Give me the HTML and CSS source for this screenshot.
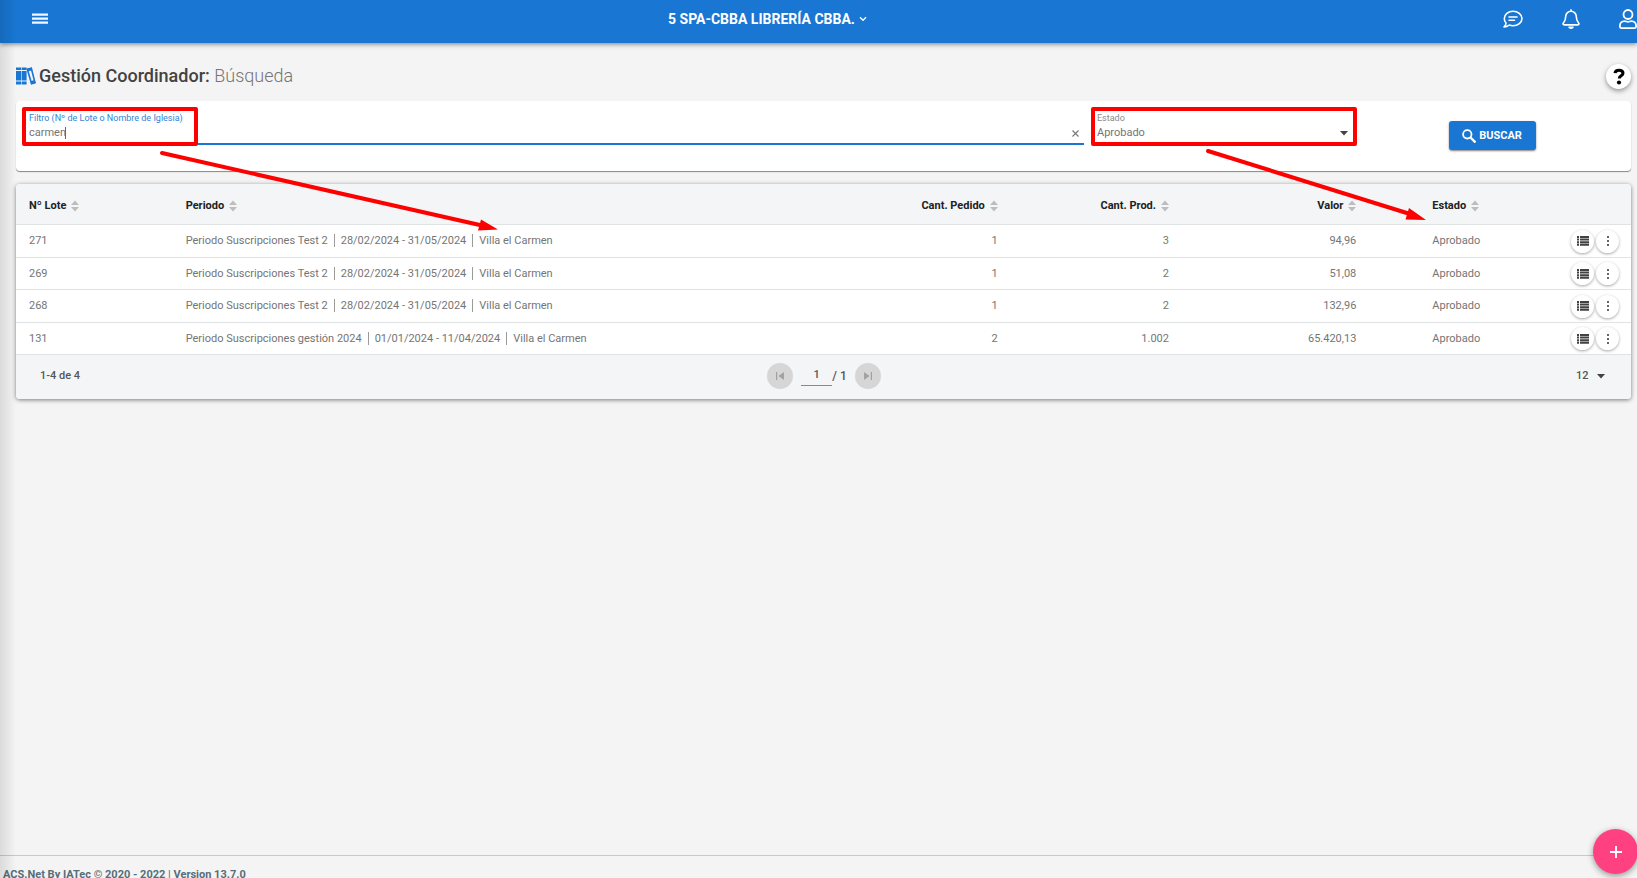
FILE: index.html
```html
<!DOCTYPE html>
<html lang="es">
<head>
<meta charset="utf-8">
<title>Gestión Coordinador</title>
<link rel="stylesheet" href="styles.css">
</head>
<body>
<svg class="sprite" aria-hidden="true">
  <symbol id="sort" viewBox="0 0 8 12"><path d="M4 .5l4 4.500H0zM4 11.500l4-4.500H0z"/></symbol>
  <symbol id="list" viewBox="0 0 12 10"><path d="M0 0h2v2H0zM3 0h9v2H3zM0 2.600h2v2H0zM3 2.600h9v2H3zM0 5.200h2v2H0zM3 5.200h9v2H3zM0 7.800h2v2H0zM3 7.800h9v2H3z"/></symbol>
  <symbol id="dots" viewBox="0 0 4 12"><circle cx="2" cy="2" r="1.100"/><circle cx="2" cy="6" r="1.100"/><circle cx="2" cy="10" r="1.100"/></symbol>
</svg>

<header class="topbar">
  <button class="icon-btn" aria-label="Menú"><svg width="16" height="12" viewBox="0 0 16 12"><path d="M0 .5h16v2.200H0zM0 4.500h16v2.200H0zM0 8.500h16v2.200H0z" fill="#f2f8ff"/></svg></button>
  <button class="org">5 SPA-CBBA LIBRERÍA CBBA.<svg width="8" height="6" viewBox="0 0 8 6"><path d="M1 1.200l3 3 3-3" fill="none" stroke="#fff" stroke-width="1.400"/></svg></button>
  <nav class="actions">
    <button class="icon-btn" aria-label="Mensajes"><svg width="20" height="18" viewBox="0 0 20 18" fill="none" stroke="#fff" stroke-width="1.600" stroke-linecap="round" stroke-linejoin="round"><path d="M1 17c1.300-1 2-2.500 2-4C1.800 11.700 1.300 10.200 1.300 8.500 1.300 4.500 5.200 1.200 10 1.200s9 3.300 9 7.300-4.100 7.200-9 7.200c-1.300 0-2.600-.2-3.700-.7C4.800 16.200 3 17 1 17z"/><path d="M6 7h8M6 10.200h5.500"/></svg></button>
    <button class="icon-btn" aria-label="Notificaciones"><svg width="18" height="20" viewBox="0 0 18 20" fill="none" stroke="#fff" stroke-width="1.600" stroke-linecap="round" stroke-linejoin="round"><path d="M9 .9v1.300M9 2.300c-3.100 0-5.300 2.300-5.300 5.300 0 4-1.200 5.200-2.300 6.400-.8.900-.3 1.900.8 1.900h13.600c1.100 0 1.600-1 .8-1.900-1.100-1.200-2.300-2.400-2.300-6.400 0-3-2.200-5.300-5.300-5.300z"/><path d="M7 18.200c.5 1.200 3.500 1.200 4 0z" fill="#fff"/></svg></button>
    <button class="icon-btn" aria-label="Usuario"><svg width="18" height="20" viewBox="0 0 18 20" fill="none" stroke="#fff" stroke-width="1.800"><circle cx="9" cy="5.500" r="4.500"/><path d="M5.500 12.200c1.500 0 2 .6 3.500.6s2-.6 3.500-.6c2.500 0 4.600 1.800 4.600 4.600v.8c0 .9-.6 1.500-1.500 1.500H2.400c-.9 0-1.500-.6-1.500-1.500v-.8c0-2.800 2.100-4.600 4.600-4.600z"/></svg></button>
  </nav>
</header>

<main class="page">
  <div class="title-row">
    <svg width="20" height="18" viewBox="0 0 20 18" fill="#1976d2"><path d="M0 .5h5V3H0zM0 4h5v9.500H0zM0 14.500h5V17.500H0zM5.600.5h5V3h-5zM5.600 4h5v9.500h-5zM5.600 14.500h5v3h-5z"/><path d="M11.300 2.200l4-1 3.700 14.600-3.400.9zM11.300 2.200l4.300 14.500" fill="none" stroke="#1976d2" stroke-width="1.600"/><path d="M11 1.800l4.600-1.200.7 2.600-4.600 1.200zM14.300 14.300l4.500-1.200.7 3-4.500 1.200z"/></svg>
    <h1>Gestión Coordinador: <span>Búsqueda</span></h1>
    <button class="help" aria-label="Ayuda"><svg width="12" height="17" viewBox="0 0 12 17"><path d="M2 5.200C2.200 3.200 3.800 2.200 6 2.200c2.400 0 4 1.200 4 3 0 2.600-3.700 2.600-3.700 5.200" fill="none" stroke="#000" stroke-width="3"/><circle cx="6" cy="14.500" r="2.100"/></svg></button>
  </div>

  <form class="card filters">
    <div class="field active marked">
      <label for="filtro">Filtro (Nº de Lote o Nombre de Iglesia)</label>
      <div class="control">
        <span class="entry"><input id="filtro" type="text" value="carmen" size="6"><i class="caret"></i></span>
        <button type="button" class="clear" aria-label="Limpiar"><svg width="7" height="7" viewBox="0 0 7 7"><path d="M.5.5l6 6M6.500.5l-6 6" stroke="#777" stroke-width="1.100"/></svg></button>
      </div>
    </div>
    <div class="field marked">
      <label for="estado">Estado</label>
      <div class="control">
        <select id="estado"><option>Aprobado</option></select>
        <svg class="arrow" width="8" height="5" viewBox="0 0 8 5"><path d="M0 0h8L4 4.500z"/></svg>
      </div>
    </div>
    <button type="button" class="search"><svg width="14" height="14" viewBox="0 0 14 14" fill="none" stroke="#fff"><circle cx="5.300" cy="5.300" r="4.200" stroke-width="1.800"/><path d="M8.500 8.500l5 5" stroke-width="2.400"/></svg>BUSCAR</button>
  </form>

  <section class="card results">
    <table>
      <colgroup><col class="c-lote"><col class="c-periodo"><col class="c-pedido"><col class="c-prod"><col class="c-valor"><col class="c-estado"><col></colgroup>
      <thead><tr>
        <th>Nº Lote<svg><use href="#sort"/></svg></th>
        <th>Periodo<svg><use href="#sort"/></svg></th>
        <th class="num">Cant. Pedido<svg><use href="#sort"/></svg></th>
        <th class="num">Cant. Prod.<svg><use href="#sort"/></svg></th>
        <th class="num">Valor<svg><use href="#sort"/></svg></th>
        <th class="state">Estado<svg><use href="#sort"/></svg></th>
        <th></th>
      </tr></thead>
      <tbody>
        <tr><td>271</td><td>Periodo Suscripciones Test 2<b></b>28/02/2024 - 31/05/2024<b></b>Villa el Carmen</td><td class="num">1</td><td class="num">3</td><td class="num">94,96</td><td class="state">Aprobado</td><td class="last"><div class="tools"><button aria-label="Detalle"><svg width="12" height="10"><use href="#list"/></svg></button><button aria-label="Más"><svg width="4" height="12"><use href="#dots"/></svg></button></div></td></tr>
        <tr><td>269</td><td>Periodo Suscripciones Test 2<b></b>28/02/2024 - 31/05/2024<b></b>Villa el Carmen</td><td class="num">1</td><td class="num">2</td><td class="num">51,08</td><td class="state">Aprobado</td><td class="last"><div class="tools"><button aria-label="Detalle"><svg width="12" height="10"><use href="#list"/></svg></button><button aria-label="Más"><svg width="4" height="12"><use href="#dots"/></svg></button></div></td></tr>
        <tr><td>268</td><td>Periodo Suscripciones Test 2<b></b>28/02/2024 - 31/05/2024<b></b>Villa el Carmen</td><td class="num">1</td><td class="num">2</td><td class="num">132,96</td><td class="state">Aprobado</td><td class="last"><div class="tools"><button aria-label="Detalle"><svg width="12" height="10"><use href="#list"/></svg></button><button aria-label="Más"><svg width="4" height="12"><use href="#dots"/></svg></button></div></td></tr>
        <tr><td>131</td><td>Periodo Suscripciones gestión 2024<b></b>01/01/2024 - 11/04/2024<b></b>Villa el Carmen</td><td class="num">2</td><td class="num">1.002</td><td class="num">65.420,13</td><td class="state">Aprobado</td><td class="last"><div class="tools"><button aria-label="Detalle"><svg width="12" height="10"><use href="#list"/></svg></button><button aria-label="Más"><svg width="4" height="12"><use href="#dots"/></svg></button></div></td></tr>
      </tbody>
    </table>
    <div class="pager">
      <span>1-4 de 4</span>
      <div class="pages">
        <button disabled aria-label="Primera página"><svg width="8" height="8" viewBox="0 0 8 8"><path d="M0 0h1.200v8H0zM8 0v8L2.500 4z"/></svg></button>
        <label><input type="text" value="1" aria-label="Página">/ 1</label>
        <button disabled aria-label="Última página"><svg width="8" height="8" viewBox="0 0 8 8"><path d="M6.800 0H8v8H6.800zM0 0v8l5.500-4z"/></svg></button>
      </div>
      <div class="size">
        <select aria-label="Filas por página"><option>12</option></select>
        <svg width="8" height="5" viewBox="0 0 8 5"><path d="M0 0h8L4 4.500z"/></svg>
      </div>
    </div>
  </section>
</main>

<footer class="foot">ACS.Net By IATec © 2020 - 2022 <span>|</span> Version 13.7.0</footer>

<button class="fab" aria-label="Agregar"><svg width="12" height="12" viewBox="0 0 12 12"><path d="M6 0v12M0 6h12" stroke="#fff" stroke-width="1.800"/></svg></button>

<svg class="notes" width="1437" height="240" aria-hidden="true">
  <g stroke="#f00" stroke-width="4" stroke-linecap="round" fill="#f00">
    <path d="M162 153L482 225.500M1208 151L1410 214"/>
    <path stroke="none" d="M498 229.500L478 230.500 481 219.500zM1426 220L1405.500 219.500 1409 208z"/>
  </g>
</svg>
</body>
</html>
```
FILE: styles.css
```css
*, ::before, ::after { box-sizing: border-box; }
body {
  margin: 0;
  height: 100vh;
  display: flex;
  flex-direction: column;
  overflow: hidden;
  background: #f4f4f4;
  color: #757575;
  font-family: Roboto, sans-serif;
  font-size: 11px;
  line-height: 14px;
}
body::before {
  content: "";
  position: fixed;
  inset: 0 auto 0 0;
  width: 16px;
  background: linear-gradient(90deg, rgba(0, 0, 0, .1), transparent);
  z-index: 3;
  pointer-events: none;
}
button, input, select { font: inherit; color: inherit; border: 0; padding: 0; background: none; }
input, select { outline: 0; appearance: none; }
svg { display: block; flex: none; }
.sprite { position: absolute; width: 0; height: 0; }

.topbar {
  position: relative;
  flex: none;
  height: 43px;
  display: flex;
  align-items: center;
  justify-content: space-between;
  padding: 0 0 5px 32px;
  background: #1976d2;
  box-shadow: 0 1px 5px rgba(0, 0, 0, .5);
}
.org {
  position: absolute;
  left: 668px;
  display: flex;
  align-items: center;
  gap: 4px;
  color: #fff;
  font-size: 14px;
  font-weight: 700;
  line-height: 18px;
}
.actions { display: flex; gap: 39px; align-items: center; }

.page { flex: 1; padding: 19px 6px 0 16px; }
.title-row { display: flex; align-items: center; height: 28px; gap: 3px; }
.title-row h1 { flex: 1; margin: 0; font-size: 18px; line-height: 24px; font-weight: 500; color: #424242; }
.title-row h1 span { font-weight: 300; color: #757575; }
.help {
  width: 25px;
  height: 25px;
  border-radius: 50%;
  background: #fff;
  box-shadow: 0 2px 5px rgba(0, 0, 0, .4);
  display: grid;
  place-items: center;
}

.card { border-radius: 4px; background: #fff; }
.filters {
  display: grid;
  grid-template-columns: 1055fr 254fr 256fr;
  gap: 13px;
  margin-top: 11px;
  height: 70px;
  padding: 10px 11px 10px 13px;
  box-shadow: 0 1px 1px rgba(0, 0, 0, .45);
}
.field { position: relative; height: 34px; }
.field label { display: block; font-size: 9px; line-height: 14px; color: #8a8a8a; }
.control { display: flex; align-items: center; justify-content: space-between; height: 16px; }
.field.active { border-bottom: 2px solid #1976d2; }
.field.active label { color: #3583d8; }
.entry { display: flex; align-items: center; }
.entry input { width: 36px; }
.caret { width: 1px; height: 12px; background: #1976d2; }
.clear { margin-right: 5px; }
.control select { flex: 1; }
.arrow { margin-right: 3px; fill: #424242; }
.marked::after {
  content: "";
  position: absolute;
  inset: -4px -6px -1px -6px;
  border: 4px solid #f00;
  border-radius: 2px;
  pointer-events: none;
}
.active.marked::after { right: auto; bottom: -3px; width: 176px; left: -7px; }
.search {
  justify-self: center;
  margin-top: 10px;
  width: 87px;
  height: 29px;
  display: flex;
  align-items: center;
  justify-content: center;
  gap: 3px;
  border-radius: 3px;
  background: #1976d2;
  box-shadow: 0 1px 2px rgba(0, 0, 0, .5);
  color: #fff;
  font-weight: 700;
}

.results { margin-top: 13px; box-shadow: 0 1px 4px rgba(0, 0, 0, .5); overflow: hidden; }
table { width: 100%; table-layout: fixed; border-spacing: 0; }
.c-lote, .c-pedido { width: 9.7%; }
.c-periodo { width: 42.2%; }
.c-prod { width: 10.6%; }
.c-valor { width: 11.6%; }
.c-estado { width: 10%; }
th, td { padding: 0 13px; text-align: left; white-space: nowrap; border-bottom: 1px solid #dfe3e4; }
th { height: 41px; padding-top: 4px; background: #f3f5f7; color: #212121; font-weight: 700; }
th svg { display: inline-block; vertical-align: -3px; width: 8px; height: 12px; margin-left: 5px; fill: #bdbdbd; }
td { height: 33px; }
tr:nth-child(even) td { height: 32px; }
td b { display: inline-block; width: 1px; height: 13px; margin: 0 6px; vertical-align: -3px; background: #9a9a9a; }
.num { text-align: right; }
.state { padding-left: 63px; }
.last { padding-right: 12px; }
.tools { display: flex; justify-content: flex-end; gap: 2px; }
.tools button {
  width: 23px;
  height: 23px;
  flex: none;
  border-radius: 50%;
  background: #fff;
  box-shadow: 0 1px 3px rgba(0, 0, 0, .35);
  display: grid;
  place-items: center;
}
.tools svg { fill: #424242; }

.pager {
  display: grid;
  grid-template-columns: 1fr auto 1fr;
  align-items: center;
  height: 44px;
  padding: 0 26px 2px 24px;
  background: #f3f5f7;
  color: #555;
  font-weight: 500;
}
.pages { display: flex; align-items: center; gap: 8px; margin-left: 3px; }
.pages button { width: 26px; height: 26px; border-radius: 50%; background: #d6d6d6; display: grid; place-items: center; }
.pages button svg { fill: #a2a2a2; }
.pages label { display: flex; align-items: center; font-size: 12px; }
.pages input { width: 31px; height: 20px; padding-bottom: 2px; border-bottom: 1px solid #8a8a8a; text-align: center; font-size: 11px; }
.size { display: flex; justify-content: flex-end; align-items: center; gap: 8px; }
.size svg { fill: #424242; }

.foot {
  flex: none;
  height: 23px;
  padding: 12px 3px 0;
  border-top: 1px solid #c8c8c8;
  white-space: nowrap;
  color: #546e7a;
  font-weight: 700;
}
.foot span { font-weight: 400; }
.fab {
  position: fixed;
  right: -1px;
  bottom: 4px;
  width: 45px;
  height: 45px;
  border-radius: 50%;
  background: #ff4081;
  box-shadow: 0 2px 6px rgba(0, 0, 0, .4);
  display: grid;
  place-items: center;
}
.notes { position: absolute; top: 0; left: 0; pointer-events: none; }
```
